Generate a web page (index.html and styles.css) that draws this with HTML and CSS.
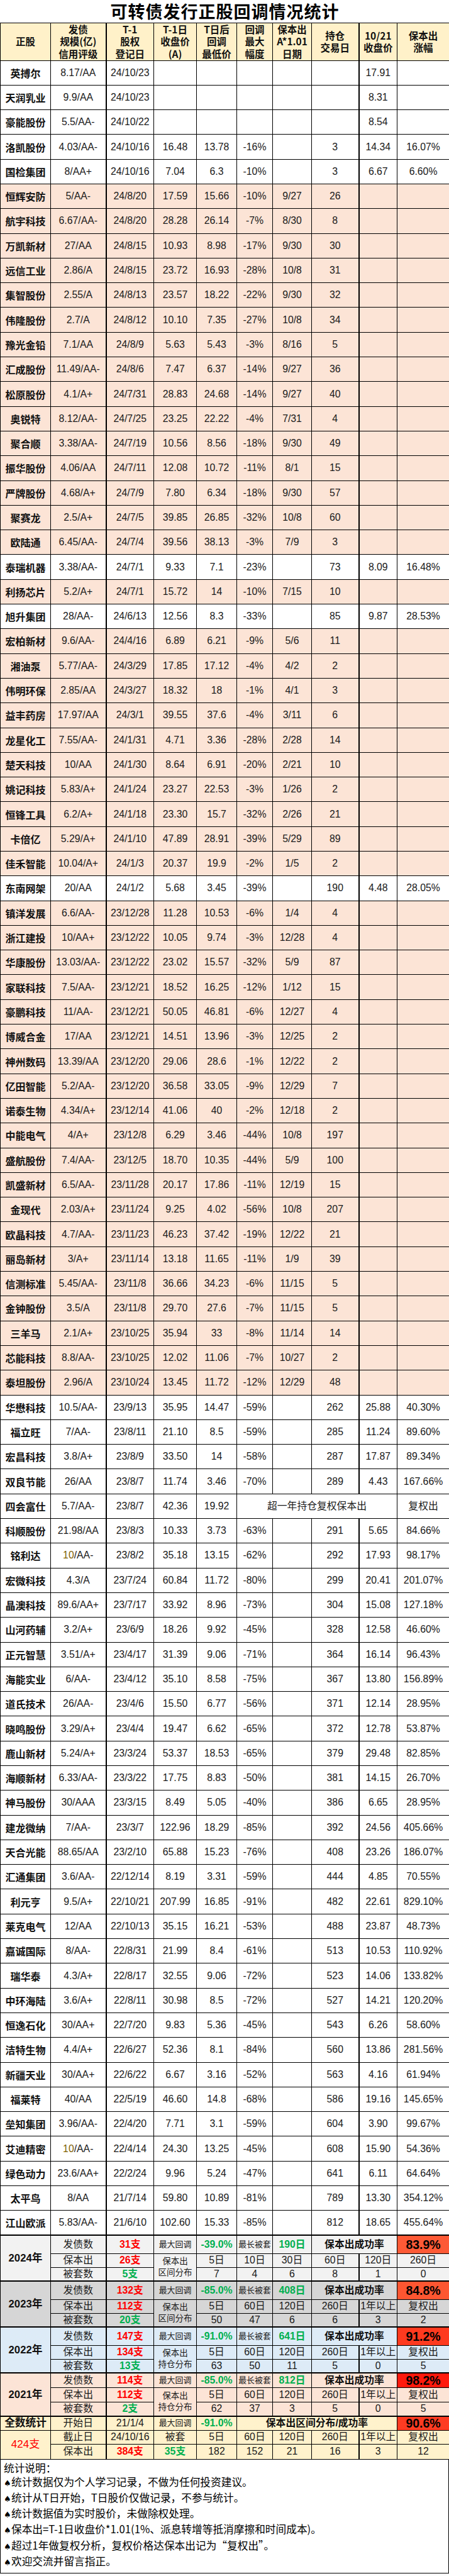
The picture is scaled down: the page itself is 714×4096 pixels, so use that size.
FILE: index.html
```html
<!DOCTYPE html>
<html lang="zh-CN">
<head>
<meta charset="utf-8">
<title>可转债发行正股回调情况统计</title>
<link rel="stylesheet" href="styles.css">
</head>
<body>
<table class="sheet">
<colgroup>
<col class="c1"><col class="c2"><col class="c3"><col class="c4"><col class="c5"><col class="c6"><col class="c7"><col class="c8"><col class="c9"><col class="c10">
</colgroup>
<thead>
<tr class="title-row"><th colspan="10" class="title">可转债发行正股回调情况统计</th></tr>
<tr class="head">
<th>正股</th>
<th>发债<br>规模(亿)<br>信用评级</th>
<th>T-1<br>股权<br>登记日</th>
<th>T-1日<br>收盘价<br>(A)</th>
<th>T日后<br>回调<br>最低价</th>
<th>回调<br>最大<br>幅度</th>
<th>保本出<br>A*1.01<br>日期</th>
<th>持仓<br>交易日</th>
<th>10/21<br>收盘价</th>
<th>保本出<br>涨幅</th>
</tr>
</thead>
<tbody class="data">
<tr><th>英搏尔</th><td>8.17/AA</td><td>24/10/23</td><td></td><td></td><td></td><td></td><td></td><td>17.91</td><td></td></tr>
<tr><th>天润乳业</th><td>9.9/AA</td><td>24/10/23</td><td></td><td></td><td></td><td></td><td></td><td>8.31</td><td></td></tr>
<tr><th>豪能股份</th><td>5.5/AA-</td><td>24/10/22</td><td></td><td></td><td></td><td></td><td></td><td>8.54</td><td></td></tr>
<tr><th>洛凯股份</th><td>4.03/AA-</td><td>24/10/16</td><td>16.48</td><td>13.78</td><td>-16%</td><td></td><td>3</td><td>14.34</td><td>16.07%</td></tr>
<tr><th>国检集团</th><td>8/AA+</td><td>24/10/16</td><td>7.04</td><td>6.3</td><td>-10%</td><td></td><td>3</td><td>6.67</td><td>6.60%</td></tr>
<tr class="p"><th>恒辉安防</th><td>5/AA-</td><td>24/8/20</td><td>17.59</td><td>15.66</td><td>-10%</td><td>9/27</td><td>26</td><td></td><td></td></tr>
<tr class="p"><th>航宇科技</th><td>6.67/AA-</td><td>24/8/20</td><td>28.28</td><td>26.14</td><td>-7%</td><td>8/30</td><td>8</td><td></td><td></td></tr>
<tr class="p"><th>万凯新材</th><td>27/AA</td><td>24/8/15</td><td>10.93</td><td>8.98</td><td>-17%</td><td>9/30</td><td>30</td><td></td><td></td></tr>
<tr class="p"><th>远信工业</th><td>2.86/A</td><td>24/8/15</td><td>23.72</td><td>16.93</td><td>-28%</td><td>10/8</td><td>31</td><td></td><td></td></tr>
<tr class="p"><th>集智股份</th><td>2.55/A</td><td>24/8/13</td><td>23.57</td><td>18.22</td><td>-22%</td><td>9/30</td><td>32</td><td></td><td></td></tr>
<tr class="p"><th>伟隆股份</th><td>2.7/A</td><td>24/8/12</td><td>10.10</td><td>7.35</td><td>-27%</td><td>10/8</td><td>34</td><td></td><td></td></tr>
<tr class="p"><th>豫光金铅</th><td>7.1/AA</td><td>24/8/9</td><td>5.63</td><td>5.43</td><td>-3%</td><td>8/16</td><td>5</td><td></td><td></td></tr>
<tr class="p"><th>汇成股份</th><td>11.49/AA-</td><td>24/8/6</td><td>7.47</td><td>6.37</td><td>-14%</td><td>9/27</td><td>36</td><td></td><td></td></tr>
<tr class="p"><th>松原股份</th><td>4.1/A+</td><td>24/7/31</td><td>28.83</td><td>24.68</td><td>-14%</td><td>9/27</td><td>40</td><td></td><td></td></tr>
<tr class="p"><th>奥锐特</th><td>8.12/AA-</td><td>24/7/25</td><td>23.25</td><td>22.22</td><td>-4%</td><td>7/31</td><td>4</td><td></td><td></td></tr>
<tr class="p"><th>聚合顺</th><td>3.38/AA-</td><td>24/7/19</td><td>10.56</td><td>8.56</td><td>-18%</td><td>9/30</td><td>49</td><td></td><td></td></tr>
<tr class="p"><th>振华股份</th><td>4.06/AA</td><td>24/7/11</td><td>12.08</td><td>10.72</td><td>-11%</td><td>8/1</td><td>15</td><td></td><td></td></tr>
<tr class="p"><th>严牌股份</th><td>4.68/A+</td><td>24/7/9</td><td>7.80</td><td>6.34</td><td>-18%</td><td>9/30</td><td>57</td><td></td><td></td></tr>
<tr class="p"><th>聚赛龙</th><td>2.5/A+</td><td>24/7/5</td><td>39.85</td><td>26.85</td><td>-32%</td><td>10/8</td><td>60</td><td></td><td></td></tr>
<tr class="p"><th>欧陆通</th><td>6.45/AA-</td><td>24/7/4</td><td>39.56</td><td>38.13</td><td>-3%</td><td>7/9</td><td>3</td><td></td><td></td></tr>
<tr><th>泰瑞机器</th><td>3.38/AA-</td><td>24/7/1</td><td>9.33</td><td>7.1</td><td>-23%</td><td></td><td>73</td><td>8.09</td><td>16.48%</td></tr>
<tr class="p"><th>利扬芯片</th><td>5.2/A+</td><td>24/7/1</td><td>15.72</td><td>14</td><td>-10%</td><td>7/15</td><td>10</td><td></td><td></td></tr>
<tr><th>旭升集团</th><td>28/AA-</td><td>24/6/13</td><td>12.56</td><td>8.3</td><td>-33%</td><td></td><td>85</td><td>9.87</td><td>28.53%</td></tr>
<tr class="p"><th>宏柏新材</th><td>9.6/AA-</td><td>24/4/16</td><td>6.89</td><td>6.21</td><td>-9%</td><td>5/6</td><td>11</td><td></td><td></td></tr>
<tr class="p"><th>湘油泵</th><td>5.77/AA-</td><td>24/3/29</td><td>17.85</td><td>17.12</td><td>-4%</td><td>4/2</td><td>2</td><td></td><td></td></tr>
<tr class="p"><th>伟明环保</th><td>2.85/AA</td><td>24/3/27</td><td>18.32</td><td>18</td><td>-1%</td><td>4/1</td><td>3</td><td></td><td></td></tr>
<tr class="p"><th>益丰药房</th><td>17.97/AA</td><td>24/3/1</td><td>39.55</td><td>37.6</td><td>-4%</td><td>3/11</td><td>6</td><td></td><td></td></tr>
<tr class="p"><th>龙星化工</th><td>7.55/AA-</td><td>24/1/31</td><td>4.71</td><td>3.36</td><td>-28%</td><td>2/28</td><td>14</td><td></td><td></td></tr>
<tr class="p"><th>楚天科技</th><td>10/AA</td><td>24/1/30</td><td>8.64</td><td>6.91</td><td>-20%</td><td>2/21</td><td>10</td><td></td><td></td></tr>
<tr class="p"><th>姚记科技</th><td>5.83/A+</td><td>24/1/24</td><td>23.27</td><td>22.53</td><td>-3%</td><td>1/26</td><td>2</td><td></td><td></td></tr>
<tr class="p"><th>恒锋工具</th><td>6.2/A+</td><td>24/1/18</td><td>23.30</td><td>15.7</td><td>-32%</td><td>2/26</td><td>21</td><td></td><td></td></tr>
<tr class="p"><th>卡倍亿</th><td>5.29/A+</td><td>24/1/10</td><td>47.89</td><td>28.91</td><td>-39%</td><td>5/29</td><td>89</td><td></td><td></td></tr>
<tr class="p"><th>佳禾智能</th><td>10.04/A+</td><td>24/1/3</td><td>20.37</td><td>19.9</td><td>-2%</td><td>1/5</td><td>2</td><td></td><td></td></tr>
<tr><th>东南网架</th><td>20/AA</td><td>24/1/2</td><td>5.68</td><td>3.45</td><td>-39%</td><td></td><td>190</td><td>4.48</td><td>28.05%</td></tr>
<tr class="p"><th>镇洋发展</th><td>6.6/AA-</td><td>23/12/28</td><td>11.28</td><td>10.53</td><td>-6%</td><td>1/4</td><td>4</td><td></td><td></td></tr>
<tr class="p"><th>浙江建投</th><td>10/AA+</td><td>23/12/22</td><td>10.05</td><td>9.74</td><td>-3%</td><td>12/28</td><td>4</td><td></td><td></td></tr>
<tr class="p"><th>华康股份</th><td>13.03/AA-</td><td>23/12/22</td><td>23.02</td><td>15.57</td><td>-32%</td><td>5/9</td><td>87</td><td></td><td></td></tr>
<tr class="p"><th>家联科技</th><td>7.5/AA-</td><td>23/12/21</td><td>18.52</td><td>16.25</td><td>-12%</td><td>1/12</td><td>15</td><td></td><td></td></tr>
<tr class="p"><th>豪鹏科技</th><td>11/AA-</td><td>23/12/21</td><td>50.05</td><td>46.81</td><td>-6%</td><td>12/27</td><td>4</td><td></td><td></td></tr>
<tr class="p"><th>博威合金</th><td>17/AA</td><td>23/12/21</td><td>14.51</td><td>13.96</td><td>-3%</td><td>12/25</td><td>2</td><td></td><td></td></tr>
<tr class="p"><th>神州数码</th><td>13.39/AA</td><td>23/12/20</td><td>29.06</td><td>28.6</td><td>-1%</td><td>12/22</td><td>2</td><td></td><td></td></tr>
<tr class="p"><th>亿田智能</th><td>5.2/AA-</td><td>23/12/20</td><td>36.58</td><td>33.05</td><td>-9%</td><td>12/29</td><td>7</td><td></td><td></td></tr>
<tr class="p"><th>诺泰生物</th><td>4.34/A+</td><td>23/12/14</td><td>41.06</td><td>40</td><td>-2%</td><td>12/18</td><td>2</td><td></td><td></td></tr>
<tr class="p"><th>中能电气</th><td>4/A+</td><td>23/12/8</td><td>6.29</td><td>3.46</td><td>-44%</td><td>10/8</td><td>197</td><td></td><td></td></tr>
<tr class="p"><th>盛航股份</th><td>7.4/AA-</td><td>23/12/5</td><td>18.70</td><td>10.35</td><td>-44%</td><td>5/9</td><td>100</td><td></td><td></td></tr>
<tr class="p"><th>凯盛新材</th><td>6.5/AA-</td><td>23/11/28</td><td>20.17</td><td>17.86</td><td>-11%</td><td>12/19</td><td>15</td><td></td><td></td></tr>
<tr class="p"><th>金现代</th><td>2.03/A+</td><td>23/11/24</td><td>9.25</td><td>4.02</td><td>-56%</td><td>10/8</td><td>207</td><td></td><td></td></tr>
<tr class="p"><th>欧晶科技</th><td>4.7/AA-</td><td>23/11/23</td><td>46.23</td><td>37.42</td><td>-19%</td><td>12/22</td><td>21</td><td></td><td></td></tr>
<tr class="p"><th>丽岛新材</th><td>3/A+</td><td>23/11/14</td><td>13.18</td><td>11.65</td><td>-11%</td><td>1/9</td><td>39</td><td></td><td></td></tr>
<tr class="p"><th>信测标准</th><td>5.45/AA-</td><td>23/11/8</td><td>36.66</td><td>34.23</td><td>-6%</td><td>11/15</td><td>5</td><td></td><td></td></tr>
<tr class="p"><th>金钟股份</th><td>3.5/A</td><td>23/11/8</td><td>29.70</td><td>27.6</td><td>-7%</td><td>11/15</td><td>5</td><td></td><td></td></tr>
<tr class="p"><th>三羊马</th><td>2.1/A+</td><td>23/10/25</td><td>35.94</td><td>33</td><td>-8%</td><td>11/14</td><td>14</td><td></td><td></td></tr>
<tr class="p"><th>芯能科技</th><td>8.8/AA-</td><td>23/10/25</td><td>12.02</td><td>11.06</td><td>-7%</td><td>10/27</td><td>2</td><td></td><td></td></tr>
<tr class="p"><th>泰坦股份</th><td>2.96/A</td><td>23/10/24</td><td>13.45</td><td>11.72</td><td>-12%</td><td>12/29</td><td>48</td><td></td><td></td></tr>
<tr><th>华懋科技</th><td>10.5/AA-</td><td>23/9/13</td><td>35.95</td><td>14.47</td><td>-59%</td><td></td><td>262</td><td>25.88</td><td>40.30%</td></tr>
<tr><th>福立旺</th><td>7/AA-</td><td>23/8/11</td><td>21.10</td><td>8.5</td><td>-59%</td><td></td><td>285</td><td>11.24</td><td>89.60%</td></tr>
<tr><th>宏昌科技</th><td>3.8/A+</td><td>23/8/9</td><td>33.50</td><td>14</td><td>-58%</td><td></td><td>287</td><td>17.87</td><td>89.34%</td></tr>
<tr><th>双良节能</th><td>26/AA</td><td>23/8/7</td><td>11.74</td><td>3.46</td><td>-70%</td><td></td><td>289</td><td>4.43</td><td>167.66%</td></tr>
<tr><th>四会富仕</th><td>5.7/AA-</td><td>23/8/7</td><td>42.36</td><td>19.92</td><td colspan="4">超一年持仓复权保本出</td><td>复权出</td></tr>
<tr><th>科顺股份</th><td>21.98/AA</td><td>23/8/3</td><td>10.33</td><td>3.73</td><td>-63%</td><td></td><td>291</td><td>5.65</td><td>84.66%</td></tr>
<tr><th>铭利达</th><td><span class="olive">10</span>/AA-</td><td>23/8/2</td><td>35.18</td><td>13.15</td><td>-62%</td><td></td><td>292</td><td>17.93</td><td>98.17%</td></tr>
<tr><th>宏微科技</th><td>4.3/A</td><td>23/7/24</td><td>60.84</td><td>11.72</td><td>-80%</td><td></td><td>299</td><td>20.41</td><td>201.07%</td></tr>
<tr><th>晶澳科技</th><td>89.6/AA+</td><td>23/7/17</td><td>33.92</td><td>8.96</td><td>-73%</td><td></td><td>304</td><td>15.08</td><td>127.18%</td></tr>
<tr><th>山河药辅</th><td>3.2/A+</td><td>23/6/9</td><td>18.26</td><td>9.92</td><td>-45%</td><td></td><td>328</td><td>12.58</td><td>46.60%</td></tr>
<tr><th>正元智慧</th><td>3.51/A+</td><td>23/4/17</td><td>31.39</td><td>9.06</td><td>-71%</td><td></td><td>364</td><td>16.14</td><td>96.43%</td></tr>
<tr><th>海能实业</th><td>6/AA-</td><td>23/4/12</td><td>35.10</td><td>8.58</td><td>-75%</td><td></td><td>367</td><td>13.80</td><td>156.89%</td></tr>
<tr><th>道氏技术</th><td>26/AA-</td><td>23/4/6</td><td>15.50</td><td>6.77</td><td>-56%</td><td></td><td>371</td><td>12.14</td><td>28.95%</td></tr>
<tr><th>晓鸣股份</th><td>3.29/A+</td><td>23/4/4</td><td>19.47</td><td>6.62</td><td>-65%</td><td></td><td>372</td><td>12.78</td><td>53.87%</td></tr>
<tr><th>鹿山新材</th><td>5.24/A+</td><td>23/3/24</td><td>53.37</td><td>18.53</td><td>-65%</td><td></td><td>379</td><td>29.48</td><td>82.85%</td></tr>
<tr><th>海顺新材</th><td>6.33/AA-</td><td>23/3/22</td><td>17.75</td><td>8.83</td><td>-50%</td><td></td><td>381</td><td>14.15</td><td>26.70%</td></tr>
<tr><th>神马股份</th><td>30/AAA</td><td>23/3/15</td><td>8.49</td><td>5.05</td><td>-40%</td><td></td><td>386</td><td>6.65</td><td>28.95%</td></tr>
<tr><th>建龙微纳</th><td>7/AA-</td><td>23/3/7</td><td>122.96</td><td>18.29</td><td>-85%</td><td></td><td>392</td><td>24.56</td><td>405.66%</td></tr>
<tr><th>天合光能</th><td>88.65/AA</td><td>23/2/10</td><td>65.88</td><td>15.23</td><td>-76%</td><td></td><td>408</td><td>23.26</td><td>186.07%</td></tr>
<tr><th>汇通集团</th><td>3.6/AA-</td><td>22/12/14</td><td>8.19</td><td>3.31</td><td>-59%</td><td></td><td>444</td><td>4.85</td><td>70.55%</td></tr>
<tr><th>利元亨</th><td>9.5/A+</td><td>22/10/21</td><td>207.99</td><td>16.85</td><td>-91%</td><td></td><td>482</td><td>22.61</td><td>829.10%</td></tr>
<tr><th>莱克电气</th><td>12/AA</td><td>22/10/13</td><td>35.15</td><td>16.21</td><td>-53%</td><td></td><td>488</td><td>23.87</td><td>48.73%</td></tr>
<tr><th>嘉诚国际</th><td>8/AA-</td><td>22/8/31</td><td>21.99</td><td>8.4</td><td>-61%</td><td></td><td>513</td><td>10.53</td><td>110.92%</td></tr>
<tr><th>瑞华泰</th><td>4.3/A+</td><td>22/8/17</td><td>32.55</td><td>9.06</td><td>-72%</td><td></td><td>523</td><td>14.06</td><td>133.82%</td></tr>
<tr><th>中环海陆</th><td>3.6/A+</td><td>22/8/11</td><td>30.98</td><td>8.5</td><td>-72%</td><td></td><td>527</td><td>14.21</td><td>120.20%</td></tr>
<tr><th>恒逸石化</th><td>30/AA+</td><td>22/7/20</td><td>9.83</td><td>5.36</td><td>-45%</td><td></td><td>543</td><td>6.26</td><td>58.60%</td></tr>
<tr><th>洁特生物</th><td>4.4/A+</td><td>22/6/27</td><td>52.36</td><td>8.1</td><td>-84%</td><td></td><td>560</td><td>13.86</td><td>281.56%</td></tr>
<tr><th>新疆天业</th><td>30/AA+</td><td>22/6/22</td><td>6.67</td><td>3.16</td><td>-52%</td><td></td><td>563</td><td>4.16</td><td>61.94%</td></tr>
<tr><th>福莱特</th><td>40/AA</td><td>22/5/19</td><td>46.60</td><td>14.8</td><td>-68%</td><td></td><td>586</td><td>19.16</td><td>145.65%</td></tr>
<tr><th>垒知集团</th><td>3.96/AA-</td><td>22/4/20</td><td>7.71</td><td>3.1</td><td>-59%</td><td></td><td>604</td><td>3.90</td><td>99.67%</td></tr>
<tr><th>艾迪精密</th><td><span class="olive">10</span>/AA-</td><td>22/4/14</td><td>24.30</td><td>13.25</td><td>-45%</td><td></td><td>608</td><td>15.90</td><td>54.36%</td></tr>
<tr><th>绿色动力</th><td>23.6/AA+</td><td>22/2/24</td><td>9.96</td><td>5.24</td><td>-47%</td><td></td><td>641</td><td>6.11</td><td>64.64%</td></tr>
<tr><th>太平鸟</th><td>8/AA</td><td>21/7/14</td><td>59.80</td><td>10.89</td><td>-81%</td><td></td><td>789</td><td>13.30</td><td>354.12%</td></tr>
<tr><th>江山欧派</th><td>5.83/AA-</td><td>21/6/10</td><td>102.60</td><td>15.33</td><td>-85%</td><td></td><td>812</td><td>18.65</td><td>455.64%</td></tr>
</tbody>

<tbody class="sum y24">
<tr class="s1"><th rowspan="3" class="yr">2024年</th><td>发债数</td><td class="red">31支</td><td class="sm">最大回调</td><td class="grn">-39.0%</td><td class="sm">最长被套</td><td class="grn">190日</td><td colspan="2" class="rl">保本出成功率</td><td class="rate r1">83.9%</td></tr>
<tr class="s2"><td>保本出</td><td class="red">26支</td><td rowspan="2" class="sm2">保本出<br>区间分布</td><td>5日</td><td>10日</td><td>30日</td><td>60日</td><td>120日</td><td>260日</td></tr>
<tr class="s3"><td>被套数</td><td class="grn">5支</td><td>7</td><td>4</td><td>6</td><td>8</td><td>1</td><td>0</td></tr>
</tbody>

<tbody class="sum y23">
<tr class="s1"><th rowspan="3" class="yr">2023年</th><td>发债数</td><td class="red">132支</td><td class="sm">最大回调</td><td class="grn">-85.0%</td><td class="sm">最长被套</td><td class="grn">408日</td><td colspan="2" class="rl">保本出成功率</td><td class="rate r2">84.8%</td></tr>
<tr class="s2"><td>保本出</td><td class="red">112支</td><td rowspan="2" class="sm2">保本出<br>区间分布</td><td>5日</td><td>60日</td><td>120日</td><td>260日</td><td>1年以上</td><td>复权出</td></tr>
<tr class="s3"><td>被套数</td><td class="grn">20支</td><td>50</td><td>47</td><td>6</td><td>6</td><td>3</td><td>2</td></tr>
</tbody>

<tbody class="sum y22">
<tr class="s1"><th rowspan="3" class="yr">2022年</th><td>发债数</td><td class="red">147支</td><td class="sm">最大回调</td><td class="grn">-91.0%</td><td class="sm">最长被套</td><td class="grn">641日</td><td colspan="2" class="rl">保本出成功率</td><td class="rate r3">91.2%</td></tr>
<tr class="s2"><td>保本出</td><td class="red">134支</td><td rowspan="2" class="sm2">保本出<br>持仓分布</td><td>5日</td><td>60日</td><td>120日</td><td>260日</td><td>1年以上</td><td>复权出</td></tr>
<tr class="s3"><td>被套数</td><td class="grn">13支</td><td>63</td><td>50</td><td>11</td><td>5</td><td>0</td><td>5</td></tr>
</tbody>

<tbody class="sum y21">
<tr class="s1"><th rowspan="3" class="yr">2021年</th><td>发债数</td><td class="red">114支</td><td class="sm">最大回调</td><td class="grn">-85.0%</td><td class="sm">最长被套</td><td class="grn">812日</td><td colspan="2" class="rl">保本出成功率</td><td class="rate r4">98.2%</td></tr>
<tr class="s2"><td>保本出</td><td class="red">112支</td><td rowspan="2" class="sm2">保本出<br>持仓分布</td><td>5日</td><td>60日</td><td>120日</td><td>260日</td><td>1年以上</td><td>复权出</td></tr>
<tr class="s3"><td>被套数</td><td class="grn">2支</td><td>62</td><td>37</td><td>3</td><td>5</td><td>0</td><td>5</td></tr>
</tbody>

<tbody class="sum yall">
<tr class="s1"><th class="yr">全数统计</th><td>开始日</td><td>21/1/4</td><td class="sm">最大回调</td><td class="grn">-91.0%</td><td colspan="4" class="rl">保本出区间分布/成功率</td><td class="rate r5">90.6%</td></tr>
<tr class="s2"><th rowspan="2" class="yr red">424支</th><td>截止日</td><td>24/10/16</td><td>被套</td><td>5日</td><td>60日</td><td>120日</td><td>260日</td><td>1年以上</td><td>复权出</td></tr>
<tr class="s3"><td>保本出</td><td class="red">384支</td><td class="grn">35支</td><td>182</td><td>152</td><td>21</td><td>16</td><td>3</td><td>12</td></tr>
</tbody>
</table>

<div class="notes">
<p class="notes-title">统计说明：</p>
<p><span class="bullet">♠</span>统计数据仅为个人学习记录，不做为任何投资建议。</p>
<p><span class="bullet">♠</span>统计从T日开始，T日股价仅做记录，不参与统计。</p>
<p><span class="bullet">♠</span>统计数据值为实时股价，未做除权处理。</p>
<p><span class="bullet">♠</span>保本出=T-1日收盘价*1.01(1%、派息转增等抵消摩擦和时间成本)。</p>
<p><span class="bullet">♠</span>超过1年做复权分析，复权价格达保本出记为“复权出”。</p>
<p><span class="bullet">♠</span>欢迎交流并留言指正。</p>
</div>
</body>
</html>
```
FILE: styles.css
```css
* { box-sizing: border-box; }

html, body {
  margin: 0;
  padding: 0;
  background: #ffffff;
}

body {
  width: 714px;
  font-family: "Liberation Sans", "Noto Sans CJK SC", sans-serif;
  color: #1a1a1a;
}

.sheet {
  width: 714px;
  border-collapse: collapse;
  table-layout: fixed;
}

.c1 { width: 80px; }
.c2 { width: 88px; border-right: 2px solid #000; }
.c3 { width: 76px; }
.c4 { width: 68px; }
.c5 { width: 64px; }
.c6 { width: 57px; }
.c7 { width: 62px; }
.c8 { width: 75px; border-right: 2px solid #000; }
.c9 { width: 61px; }
.c10 { width: 83px; }

.sheet th,
.sheet td {
  border: 1px solid #000;
  padding: 0;
  text-align: center;
  vertical-align: middle;
  white-space: nowrap;
  overflow: hidden;
  font-size: 15.8px;
  line-height: 18px;
  font-weight: normal;
}

/* title */
.title-row { height: 36px; background: #fff; }
.sheet th.title {
  border: none;
  border-bottom: 1px solid #000;
  overflow: visible;
  padding: 0;
  font-family: "Noto Sans CJK SC", "Liberation Sans", sans-serif;
  font-size: 27px;
  line-height: 35px;
  font-weight: bold;
  letter-spacing: 1px;
  color: #000;
}

/* header */
.head { height: 60px; background: #fff1c9; }
.head th {
  font-family: "Noto Sans CJK SC", "Liberation Sans", sans-serif;
  font-weight: bold;
  font-size: 15.5px;
  line-height: 19.5px;
  color: #111;
}

/* data rows */
.data tr { height: 39.3px; background: #fff; }
.data tr.p { background: #fce4d6; }
.data th {
  font-family: "Noto Sans CJK SC", "Liberation Sans", sans-serif;
  font-weight: bold;
  font-size: 16px;
  color: #111;
}
.olive { color: #7f6000; }

/* summary */
.sum tr.s1 th, .sum tr.s1 td { border-top: 2px solid #000; }
.sum .s1 { height: 29px; }
.sum .s2 { height: 22px; }
.sum .s3 { height: 22px; }
.y21 .s1, .y21 .s2, .y21 .s3 { height: 23px; }
.yall .s1, .yall .s2 { height: 22px; }
.yall .s3 { height: 24px; }

.y24 { background: #f2f2f2; }
.y23 { background: #d6d6d6; }
.y22 { background: #ddebf7; }
.y21 { background: #fce4d6; }
.yall { background: #fff2cc; }

.sum td, .sum th {
  font-family: "Liberation Sans", "Noto Sans CJK SC", sans-serif;
  font-size: 15.8px;
  line-height: 18px;
}
.sum th.yr {
  font-weight: bold;
  font-size: 16.7px;
  color: #111;
}
.sum th.yr.red { color: #ff0000; font-weight: normal; font-size: 17px; }

.sum .red { color: #ff0000; font-weight: bold; }
.sum .grn { color: #00b050; font-weight: bold; }
.sum td.sm { font-size: 12.9px; }
.sum td.sm2 { font-size: 13.5px; line-height: 17.5px; }
.sum td.rl { font-weight: bold; font-size: 15.8px; color: #111; }
.sum td.rate {
  font-weight: bold;
  font-size: 19.5px;
  color: #000;
}
.r1 { background: #fd5a36; }
.r2 { background: #fd5631; }
.r3 { background: #fe3a1f; }
.r4 { background: #ff1a0d; }
.r5 { background: #fe3b22; }

/* notes */
.notes {
  width: 714px;
  height: 181px;
  border: 1px solid #000;
  border-top: none;
  padding: 2px 0 0 5px;
  font-family: "Noto Sans CJK SC", "Liberation Sans", sans-serif;
  font-size: 16.7px;
  line-height: 22.2px;
  color: #000;
}
.notes p { margin: 0; white-space: nowrap; }
.bullet {
  font-family: "DejaVu Sans", sans-serif;
  font-size: 13px;
  display: inline-block;
  width: 12px;
}
```
